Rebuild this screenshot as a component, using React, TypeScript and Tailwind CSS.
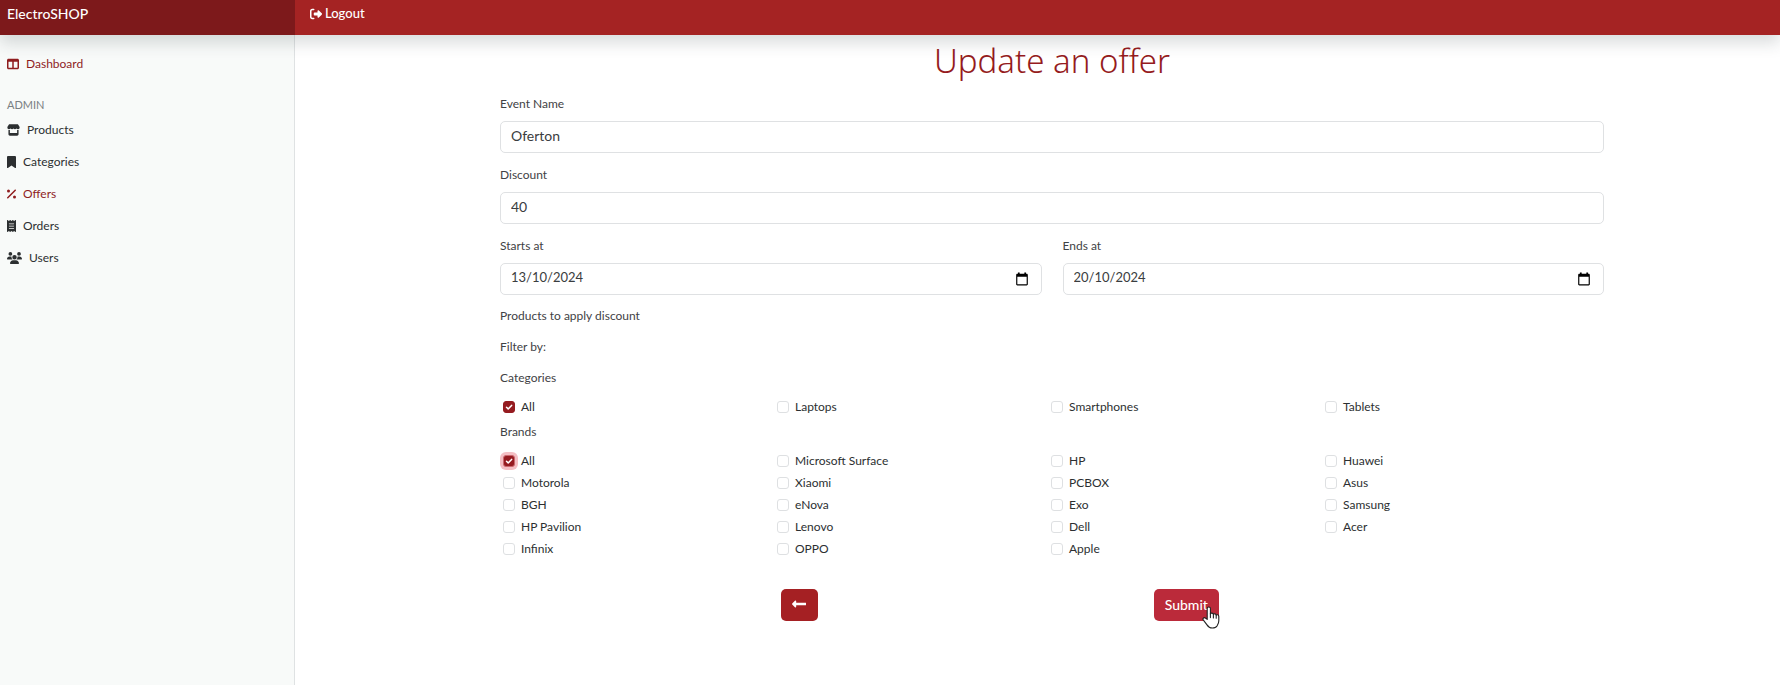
import React, { useState } from "react";
import type { ReactNode } from "react";
import type { IconType } from "react-icons";
import {
  FaBookmark,
  FaPercent,
  FaReceipt,
  FaRightFromBracket,
  FaStore,
  FaTableColumns,
  FaUsers,
} from "react-icons/fa6";
import { FaLongArrowAltLeft } from "react-icons/fa";

type NavItem = { label: string; icon: IconType; iconWidth: string; active?: boolean };

const adminItems: NavItem[] = [
  { label: "Products", icon: FaStore, iconWidth: "w-[13px]" },
  { label: "Categories", icon: FaBookmark, iconWidth: "w-[9px]" },
  { label: "Offers", icon: FaPercent, iconWidth: "w-[9px]", active: true },
  { label: "Orders", icon: FaReceipt, iconWidth: "w-[9px]" },
  { label: "Users", icon: FaUsers, iconWidth: "w-[15px]" },
];

const categories = ["All", "Laptops", "Smartphones", "Tablets"];

const brands = [
  "All", "Microsoft Surface", "HP", "Huawei",
  "Motorola", "Xiaomi", "PCBOX", "Asus",
  "BGH", "eNova", "Exo", "Samsung",
  "HP Pavilion", "Lenovo", "Dell", "Acer",
  "Infinix", "OPPO", "Apple",
];

function NavLink({ label, icon: Icon, iconWidth, active }: NavItem) {
  return (
    <a
      href="#"
      className={`flex h-8 items-center gap-[7px] text-[12px] ${active ? "text-[#8f1d1f]" : "text-[#2c2f31]"}`}
    >
      <Icon className={`h-3 ${iconWidth}`} aria-hidden="true" />
      {label}
    </a>
  );
}

function TextField({ id, label, value }: { id: string; label: string; value: string }) {
  return (
    <div>
      <label htmlFor={id} className="mb-[7px] block leading-5">
        {label}
      </label>
      <input
        id={id}
        defaultValue={value}
        className="block h-8 w-full rounded-[5px] border border-[#dfe1e3] bg-white px-[10px] pb-1 text-[14px] text-[#3a3d40] outline-none"
      />
    </div>
  );
}

function DateField({ id, label, value }: { id: string; label: string; value: string }) {
  return (
    <div className="min-w-0 flex-1">
      <label htmlFor={id} className="mb-[7px] block leading-5">
        {label}
      </label>
      <div className="flex h-8 items-center rounded-[5px] border border-[#dfe1e3] bg-white pr-3 pl-[10px]">
        <input
          id={id}
          defaultValue={value}
          className="min-w-0 flex-1 pb-[2px] text-[13px] text-[#3a3d40] outline-none"
        />
        <button type="button" aria-label={`Choose ${label}`}>
          <svg viewBox="0 0 24 24" className="size-[14px] fill-black" aria-hidden="true">
            <path d="M20 3h-1V1h-3v2H8V1H5v2H4c-1.1 0-2 .9-2 2v16c0 1.1.9 2 2 2h16c1.1 0 2-.9 2-2V5c0-1.1-.9-2-2-2zm0 18H4V8h16v13z" />
          </svg>
        </button>
      </div>
    </div>
  );
}

function CheckItem({ id, label, focused }: { id: string; label: string; focused?: boolean }) {
  const [on, setOn] = useState(label === "All");
  return (
    <div className="flex h-[22px] items-center gap-[6px] text-[#2c2f31]">
      <span className="grid size-3">
        <input
          id={id}
          type="checkbox"
          checked={on}
          onChange={() => setOn(!on)}
          className={`col-start-1 row-start-1 size-3 appearance-none rounded-[3px] border border-[#dee0e2] bg-white checked:bg-[#951b20] ${focused ? "ring-3 ring-[#f4bfc4] checked:border-[#c9686f]" : "checked:border-[#951b20]"}`}
        />
        {on && (
          <svg
            viewBox="0 0 12 12"
            className="pointer-events-none col-start-1 row-start-1 size-3 fill-none stroke-white stroke-[1.5]"
            strokeLinecap="round"
            strokeLinejoin="round"
            aria-hidden="true"
          >
            <path d="m3.5 6.2 1.7 1.7 3.4-3.5" />
          </svg>
        )}
      </span>
      <label htmlFor={id}>{label}</label>
    </div>
  );
}

function CheckGroup({ title, className, children }: { title: string; className: string; children: ReactNode }) {
  return (
    <fieldset className={className}>
      <legend className="mb-2 leading-5">{title}</legend>
      <div className="mr-[5px] ml-[3px] grid grid-cols-4">{children}</div>
    </fieldset>
  );
}

function HandPointer() {
  return (
    <svg
      viewBox="0 0 18 23"
      className="pointer-events-none absolute top-[17px] left-[48px] h-[23px] w-[18px]"
      aria-hidden="true"
    >
      <path
        d="M5.2 13.4V2.6a1.6 1.6 0 0 1 3.2 0v5.3c.3-1.2 2.8-1.1 3 .5.5-1 2.6-.7 2.8.7.7-.8 2.6-.3 2.6 1.3v4.4c0 2.6-1.2 3.9-1.8 5.2-.9 1.6-2.5 2-4.8 2-2.7 0-3.9-1-5.2-3.1L1.2 13.9c-.9-1.5 1-2.9 2.2-1.9z"
        fill="#fff"
        stroke="#222"
        strokeWidth="1.1"
        strokeLinejoin="round"
      />
      <path d="M8.4 7.6v4M11.4 8.4v3.6M14.2 9.2v3" fill="none" stroke="#222" strokeWidth="1.1" strokeLinecap="round" />
    </svg>
  );
}

export default function App() {
  return (
    <div className="flex min-h-screen flex-col bg-white font-['Lato','Noto_Sans',sans-serif] text-[12px] text-[#3f4245]">
      <header className="relative z-10 flex h-[35px] bg-[#a52323] text-white shadow-[0_8px_16px_rgba(33,48,55,0.17)]">
        <a href="#" className="flex w-[295px] shrink-0 items-center bg-[#7d191b] pb-2 pl-[7px] text-[14px] font-medium">
          ElectroSHOP
        </a>
        <a href="#" className="flex items-center gap-[3px] pb-2 pl-[15px] text-[13px] font-medium">
          <FaRightFromBracket className="size-3" aria-hidden="true" />
          Logout
        </a>
      </header>

      <div className="flex flex-1">
        <nav className="w-[295px] shrink-0 border-r border-[#dfe2e3] bg-[#f8faf9] px-[7px] pt-[13px]">
          <NavLink label="Dashboard" icon={FaTableColumns} iconWidth="w-3" active />
          <h2 className="mt-4 text-[11px] leading-[18px] text-[#7a7f83]">ADMIN</h2>
          {adminItems.map((item) => (
            <NavLink key={item.label} {...item} />
          ))}
        </nav>

        <main className="min-w-0 flex-1 pt-2 pr-44 pl-[205px]">
          <h1 className="text-center font-['Noto_Sans',sans-serif] text-[33px] leading-9 font-[350] text-[#951b20]">
            Update an offer
          </h1>
          <form className="mt-[15px]" onSubmit={(e) => e.preventDefault()}>
            <div className="flex flex-col gap-3">
              <TextField id="event-name" label="Event Name" value="Oferton" />
              <TextField id="discount" label="Discount" value="40" />
              <div className="flex gap-[21px]">
                <DateField id="starts-at" label="Starts at" value="13/10/2024" />
                <DateField id="ends-at" label="Ends at" value="20/10/2024" />
              </div>
            </div>
            <p className="mt-[11px] leading-5">Products to apply discount</p>
            <p className="mt-[11px] leading-5">Filter by:</p>
            <CheckGroup title="Categories" className="mt-[11px]">
              {categories.map((name) => (
                <CheckItem key={name} id={`category-${name}`} label={name} />
              ))}
            </CheckGroup>
            <CheckGroup title="Brands" className="mt-1">
              {brands.map((name) => (
                <CheckItem key={name} id={`brand-${name}`} label={name} focused={name === "All"} />
              ))}
            </CheckGroup>
            <div className="mt-[29px] ml-[6px] flex">
              <div className="ml-[25%] w-[34%]">
                <button
                  type="button"
                  aria-label="Back"
                  className="flex h-8 w-[37px] items-center justify-center rounded-[5px] bg-[#a52023] pb-[2px] text-white"
                >
                  <FaLongArrowAltLeft className="size-4" aria-hidden="true" />
                </button>
              </div>
              <div className="relative">
                <button
                  type="submit"
                  className="flex h-8 w-[65px] items-center justify-center rounded-[5px] bg-[#bb2a3a] pb-[2px] text-[14px] font-medium text-white"
                >
                  Submit
                </button>
                <HandPointer />
              </div>
            </div>
          </form>
        </main>
      </div>
    </div>
  );
}
